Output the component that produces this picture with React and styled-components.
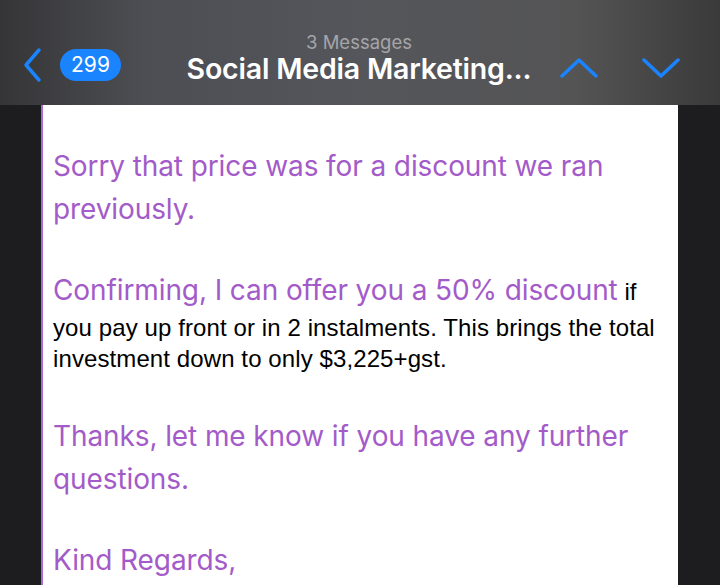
import React from 'react'
import styled, { createGlobalStyle } from 'styled-components'

const Global = createGlobalStyle`
  html, body { margin: 0; padding: 0; background: #1c1c1e; }
  body { width: 720px; height: 585px; overflow: hidden; }
`;

const Screen = styled.div`
  width: 720px;
  height: 585px;
  display: flex;
  flex-direction: column;
  background: #1d1d1f;
  overflow: hidden;
`;

const Header = styled.header`
  height: 105px;
  flex-shrink: 0;
  display: flex;
  align-items: flex-end;
  padding: 0 0 20px 0;
  box-sizing: border-box;
  background: linear-gradient(90deg, #353537 0%, #4d4e53 20%, #55565b 50%, #545455 80%, #3a3a3a 100%);
  font-family: Inter, "Noto Sans", sans-serif;
`;

const Left = styled.div`
  display: flex;
  align-items: center;
  gap: 16px;
  padding-left: 22px;
  padding-bottom: 2px;
  width: 136px;
`;

const Badge = styled.span`
  background: #1a84ff;
  color: #fff;
  font-size: 21px;
  line-height: 32px;
  padding: 0 10px;
  border-radius: 16px;
  min-width: 41px;
  text-align: center;
`;

const Titles = styled.div`
  flex: 1;
  display: flex;
  flex-direction: column;
  align-items: center;
`;

const Sub = styled.div`
  color: #a4a5a9;
  font-size: 18.5px;
  line-height: 20px;
`;

const Title = styled.div`
  color: #fff;
  font-size: 28.5px;
  font-weight: 600;
  line-height: 33px;
  letter-spacing: -0.2px;
  white-space: nowrap;
`;

const Arrows = styled.div`
  display: flex;
  align-items: center;
  gap: 44px;
  padding-right: 40px;
  padding-bottom: 5px;
`;

const Body = styled.div`
  flex: 1;
  display: flex;
  padding-left: 41px;
  padding-right: 42px;
`;

const Card = styled.div`
  flex: 1;
  background: #fff;
  border-left: 2px solid #a96bd6;
  padding: 40px 10px 0 10px;
`;

const Para = styled.p`
  margin: ${p => p.$space}px 0 0 0;
  color: #a35bc9;
  font-family: Inter, "Noto Sans", sans-serif;
  font-size: 28px;
  line-height: 43px;
  letter-spacing: -0.1px;
`;

const MixedPara = styled.p`
  margin: ${p => p.$space}px 0 0 0;
  color: #000;
  font-family: "Liberation Sans", Arial, sans-serif;
  font-size: 24px;
  line-height: 31px;
  letter-spacing: 0.1px;
`;

const Accent = styled.span`
  color: #a35bc9;
  font-family: Inter, "Noto Sans", sans-serif;
  font-size: 28px;
  line-height: 44px;
  letter-spacing: -0.1px;
`;

const Chevron = ({ d, w = 24, h = 36 }) => (
  <svg width={w} height={h} viewBox={`0 0 ${w} ${h}`} fill="none">
    <path d={d} stroke="#1a84ff" strokeWidth="3.5" strokeLinecap="round" strokeLinejoin="round" />
  </svg>
);

export default function App() {
  return (
    <Screen>
      <Global />
      <Header>
        <Left>
          <Chevron d="M17 3 L4 18 L17 33" w={22} h={36} />
          <Badge>299</Badge>
        </Left>
        <Titles>
          <Sub>3 Messages</Sub>
          <Title>Social Media Marketing...</Title>
        </Titles>
        <Arrows>
          <Chevron d="M2 20 L19 4 L36 20" w={38} h={24} />
          <Chevron d="M2 4 L19 20 L36 4" w={38} h={24} />
        </Arrows>
      </Header>
      <Body>
        <Card>
          <Para $space={0}>Sorry that price was for a discount we ran previously.</Para>
          <MixedPara $space={37}>
            <Accent>Confirming, I can offer you a 50% discount</Accent> if you pay up front or in 2 instalments. This brings the total investment down to only $3,225+gst.
          </MixedPara>
          <Para $space={41}>Thanks, let me know if you have any further questions.</Para>
          <Para $space={38}>Kind Regards,</Para>
        </Card>
      </Body>
    </Screen>
  )
}
